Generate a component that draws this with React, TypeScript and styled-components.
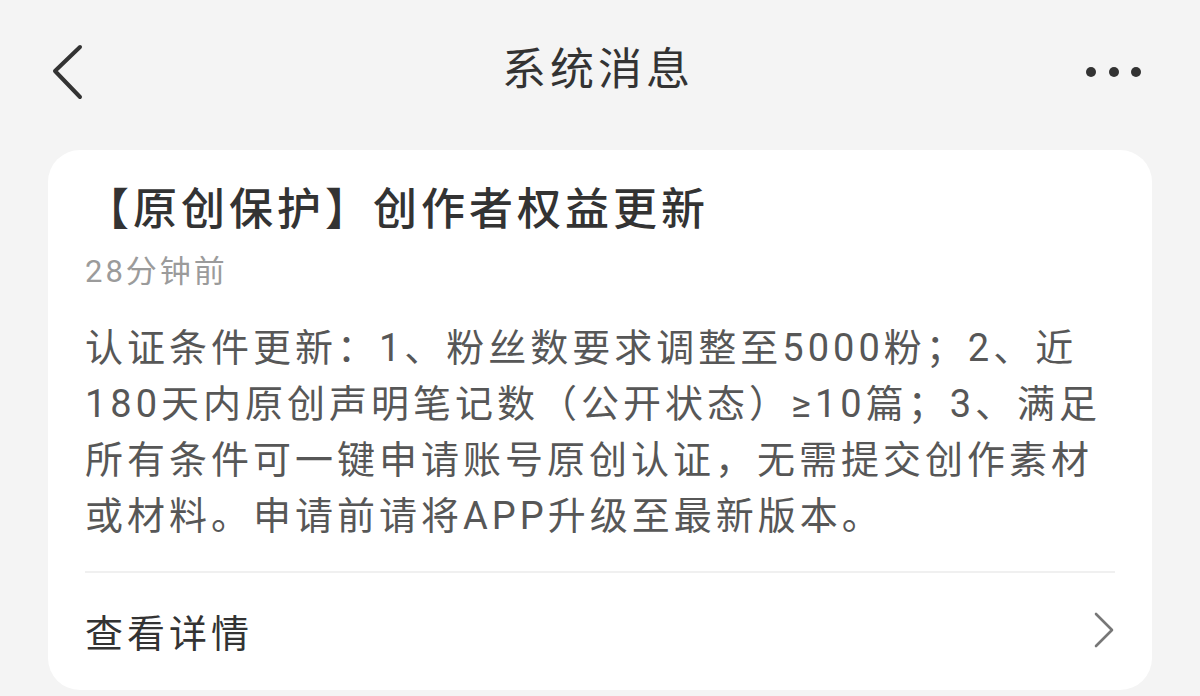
import styled, { createGlobalStyle } from 'styled-components';

const GlobalStyle = createGlobalStyle`
  html, body {
    margin: 0;
    padding: 0;
    background: #f4f4f4;
  }

  body {
    font-family: Roboto, 'Noto Sans CJK SC', 'Noto Sans', sans-serif;
    color: #333333;
  }
`;

const MESSAGE = {
  title: '【原创保护】创作者权益更新',
  time: '28分钟前',
  content:
    '认证条件更新：1、粉丝数要求调整至5000粉；2、近180天内原创声明笔记数（公开状态）≥10篇；3、满足所有条件可一键申请账号原创认证，无需提交创作素材或材料。申请前请将APP升级至最新版本。',
  action: '查看详情',
};

function BackIcon() {
  return (
    <svg width={32} height={60} viewBox='0 0 32 60' fill='none'>
      <polyline
        points='28,5 3,29 28,55'
        stroke='#333333'
        strokeWidth={4}
        strokeLinecap='round'
        strokeLinejoin='round'
      />
    </svg>
  );
}

function MoreIcon() {
  return (
    <svg width={60} height={14} viewBox='0 0 60 14' fill='#333333'>
      <circle cx={7} cy={7} r={5} />
      <circle cx={30} cy={7} r={5} />
      <circle cx={52} cy={7} r={5} />
    </svg>
  );
}

function ChevronIcon() {
  return (
    <svg width={22} height={38} viewBox='0 0 22 38' fill='none'>
      <polyline
        points='3,3 19,19 3,35'
        stroke='#777777'
        strokeWidth={2.6}
        strokeLinecap='round'
        strokeLinejoin='round'
      />
    </svg>
  );
}

function App() {
  return (
    <>
      <GlobalStyle />
      <Page>
        <Header>
          <HeaderSide>
            <BackIcon />
          </HeaderSide>
          <HeaderTitle>系统消息</HeaderTitle>
          <HeaderSide $align='end'>
            <MoreIcon />
          </HeaderSide>
        </Header>
        <Card>
          <Title>{MESSAGE.title}</Title>
          <Time>{MESSAGE.time}</Time>
          <Content>{MESSAGE.content}</Content>
          <Divider />
          <Footer>
            <FooterText>{MESSAGE.action}</FooterText>
            <ChevronIcon />
          </Footer>
        </Card>
      </Page>
    </>
  );
}

const Page = styled.div`
  display: flex;
  flex-direction: column;
  width: 1200px;
  height: 696px;
  padding: 0 48px;
  box-sizing: border-box;
  overflow: hidden;
`;

const Header = styled.header`
  display: grid;
  grid-template-columns: 1fr auto 1fr;
  align-items: center;
  height: 144px;
  padding: 0 8px 0 4px;
  flex-shrink: 0;
`;

const HeaderSide = styled.div<{ $align?: 'start' | 'end' }>`
  display: flex;
  align-items: center;
  justify-content: ${({ $align }) => ($align === 'end' ? 'flex-end' : 'flex-start')};
`;

const HeaderTitle = styled.h1`
  margin: 0 0 4px;
  font-size: 44px;
  font-weight: 400;
  letter-spacing: 4px;
  line-height: 60px;
  color: #333333;
`;

const Card = styled.section`
  display: flex;
  flex-direction: column;
  margin-top: 6px;
  height: 540px;
  padding: 30px 37px 0;
  box-sizing: border-box;
  border-radius: 32px;
  background: #ffffff;
  flex-shrink: 0;
`;

const Title = styled.h2`
  margin: 0;
  font-size: 44px;
  font-weight: 500;
  letter-spacing: 4px;
  line-height: 60px;
  color: #333333;
`;

const Time = styled.span`
  margin-top: 12px;
  font-size: 31px;
  letter-spacing: 3px;
  line-height: 40px;
  color: #9b9b9b;
`;

const Content = styled.p`
  margin: 28px 0 0;
  font-size: 38px;
  letter-spacing: 4px;
  line-height: 56px;
  color: #575757;
`;

const Divider = styled.hr`
  margin: 27px 0 0;
  height: 2px;
  border: none;
  background: #f0f0f0;
`;

const Footer = styled.div`
  display: flex;
  align-items: center;
  justify-content: space-between;
  height: 114px;
`;

const FooterText = styled.span`
  font-size: 38px;
  letter-spacing: 4px;
  color: #333333;
`;

export default App;
